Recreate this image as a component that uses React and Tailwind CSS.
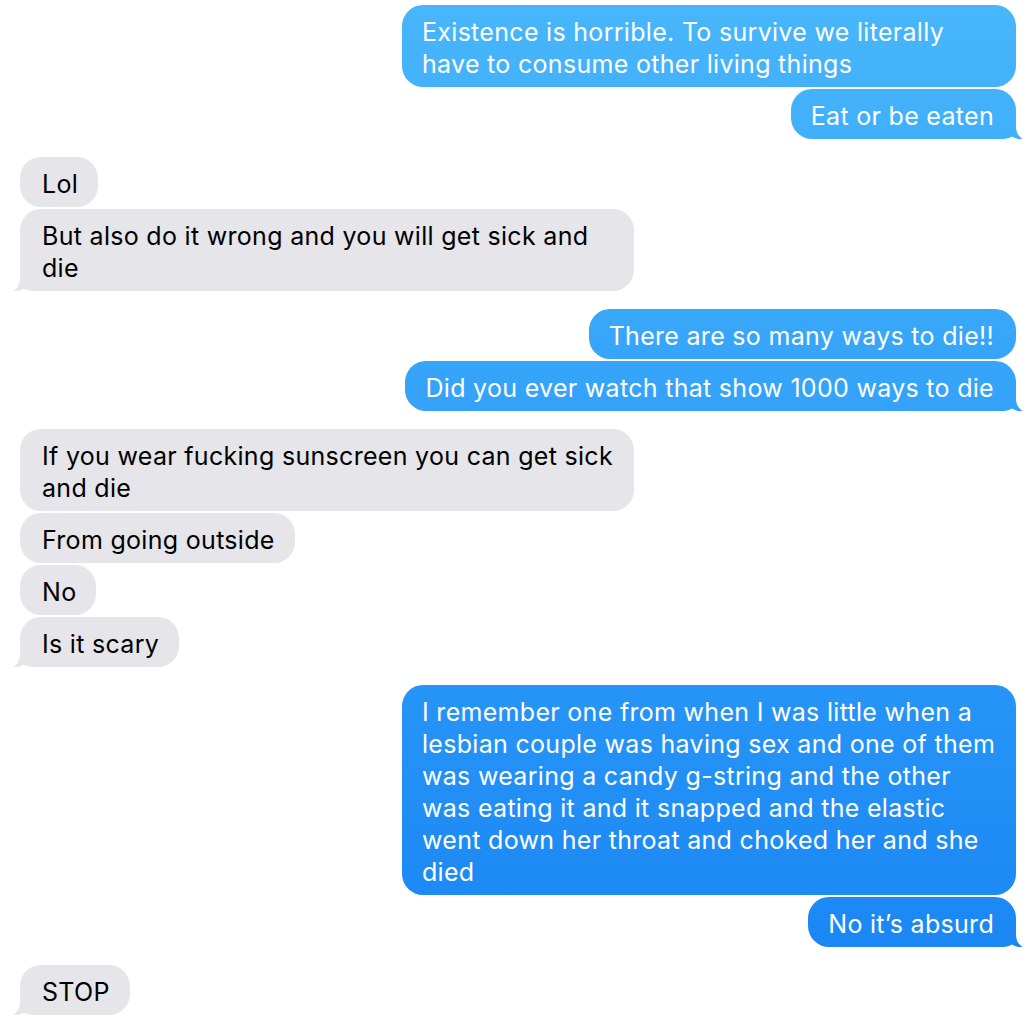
import React from "react";

const blueBg = "bg-fixed bg-linear-to-b from-[#47b6fb] to-[#1683f4]";

function Tail({ side }) {
  if (side === "right") {
    return (
      <div
        className={`absolute bottom-0 -right-[7px] w-[27px] h-[22px] ${blueBg} [clip-path:path('M0,0_L20,0_L20,9_C20,16_23,20_27,22_C23,22.5_19,21.5_16,19.5_C13,21.5_9,22_4,22_L0,22_Z')]`}
      />
    );
  }
  return (
    <div className="absolute bottom-0 -left-[7px] w-[27px] h-[22px] bg-[#e5e5ea] [clip-path:path('M27,0_L7,0_L7,9_C7,16_4,20_0,22_C4,22.5_8,21.5_11,19.5_C14,21.5_18,22_23,22_L27,22_Z')]" />
  );
}

function Bubble({ side, lines, tail, wide, mt }) {
  const isRight = side === "right";
  return (
    <div className={`flex ${isRight ? "justify-end" : "justify-start"} ${mt}`}>
      <div
        className={`relative rounded-[21px] pt-[11px] pb-[7px] leading-[32px] text-[25px] tracking-[0.3px] whitespace-nowrap ${
          wide ? "w-[614px]" : "w-fit"
        } ${
          isRight
            ? `${blueBg} text-white pl-[20px] pr-[22px]`
            : "bg-[#e5e5ea] text-black pl-[22px] pr-[20px]"
        }`}
      >
        {tail && <Tail side={side} />}
        <div className="relative">
          {lines.map((l, i) => (
            <div key={i}>{l}</div>
          ))}
        </div>
      </div>
    </div>
  );
}

export default function App() {
  const msgs = [
    { side: "right", wide: true, lines: ["Existence is horrible. To survive we literally", "have to consume other living things"], mt: "mt-0" },
    { side: "right", lines: ["Eat or be eaten"], tail: true, mt: "mt-[2px]" },
    { side: "left", lines: ["Lol"], mt: "mt-[18px]" },
    { side: "left", wide: true, lines: ["But also do it wrong and you will get sick and", "die"], tail: true, mt: "mt-[2px]" },
    { side: "right", lines: ["There are so many ways to die!!"], mt: "mt-[18px]" },
    { side: "right", lines: ["Did you ever watch that show 1000 ways to die"], tail: true, mt: "mt-[2px]" },
    { side: "left", wide: true, lines: ["If you wear fucking sunscreen you can get sick", "and die"], mt: "mt-[18px]" },
    { side: "left", lines: ["From going outside"], mt: "mt-[2px]" },
    { side: "left", lines: ["No"], mt: "mt-[2px]" },
    { side: "left", lines: ["Is it scary"], tail: true, mt: "mt-[2px]" },
    {
      side: "right",
      wide: true,
      lines: [
        "I remember one from when I was little when a",
        "lesbian couple was having sex and one of them",
        "was wearing a candy g-string and the other",
        "was eating it and it snapped and the elastic",
        "went down her throat and choked her and she",
        "died",
      ],
      mt: "mt-[18px]",
    },
    { side: "right", lines: ["No it\u2019s absurd"], tail: true, mt: "mt-[2px]" },
    { side: "left", lines: ["STOP"], tail: true, mt: "mt-[18px]" },
  ];
  return (
    <div className="w-[1028px] h-[1022px] bg-white overflow-hidden pl-[20px] pr-[12px] pt-[5px] font-['Inter','Noto_Sans',sans-serif] antialiased">
      {msgs.map((m, i) => (
        <Bubble key={i} {...m} />
      ))}
    </div>
  );
}
